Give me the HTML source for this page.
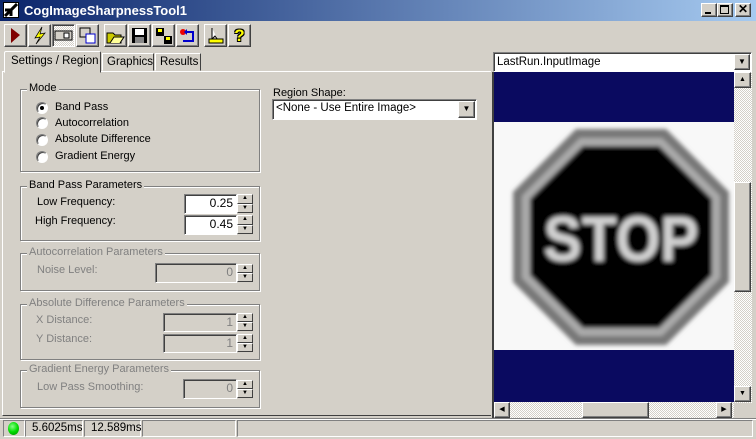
<!DOCTYPE html>
<html><head><style>
*{box-sizing:border-box;margin:0;padding:0}
body{width:756px;height:439px;background:#d4d0c8;font-family:"Liberation Sans",sans-serif;font-size:11px;position:relative;overflow:hidden;color:#000}
.a{position:absolute}
.raised{border:1px solid;border-color:#fff #404040 #404040 #fff;box-shadow:inset -1px -1px 0 #808080}
.sunk{border:1px solid;border-color:#808080 #fff #fff #808080;box-shadow:inset 1px 1px 0 #404040}
.grp{position:absolute;border:1px solid #808080;box-shadow:1px 1px 0 #fff, inset 1px 1px 0 #fff}
.grp span{position:absolute;top:-8px;left:6px;background:#d4d0c8;padding:0 2px;font-size:11px}
.dis{color:#808080}
.fld{position:absolute;background:#fff;text-align:right;padding-right:3px;font-size:12px;line-height:16px}
.fld.d{background:#d4d0c8}
.spin{position:absolute;width:16px}
.spin div{height:50%;background:#d4d0c8;border:1px solid;border-color:#fff #404040 #404040 #fff;font-size:6px;text-align:center;line-height:7px}
.radio{position:absolute;width:12px;height:12px;border-radius:50%;background:#fff;border:1px solid;border-color:#808080 #fff #fff #808080;box-shadow:inset 1px 1px 0 #404040}
.tb{position:absolute;top:24px;width:23px;height:23px}
</style></head><body>
<div class="a" style="left:0;top:0;width:756px;height:21px;background:linear-gradient(90deg,#0a246a,#a6caf0)"></div>
<div class="a" style="left:3px;top:2px;width:16px;height:16px;background:#fff;border:1px solid #000"><svg width="14" height="14"><path d="M1 13L13 1M1 7h6v6" stroke="#000" stroke-width="3" fill="none"/></svg></div>
<div class="a" style="left:24px;top:3px;color:#fff;font-weight:bold;font-size:13px">CogImageSharpnessTool1</div>
<div class="a raised" style="left:701px;top:3px;width:16px;height:14px;background:#d4d0c8"><div class="a" style="left:3px;top:8px;width:6px;height:2px;background:#000"></div></div>
<div class="a raised" style="left:717px;top:3px;width:16px;height:14px;background:#d4d0c8"><div class="a" style="left:2px;top:1px;width:9px;height:9px;border:1px solid #000;border-top-width:2px"></div></div>
<div class="a raised" style="left:735px;top:3px;width:16px;height:14px;background:#d4d0c8;font-size:12px;font-weight:bold;line-height:11px;text-align:center">✕</div>
<div class="tb raised" style="left:4px"><svg width="21" height="21"><path d="M6 3L15 10L6 18Z" fill="#800000"/></svg></div>
<div class="tb raised" style="left:28px"><svg width="21" height="21"><path d="M13 2L6 13L11 12L7 19L16 8L11 9Z" fill="#ff0" stroke="#000" stroke-width=".7"/></svg></div>
<div class="tb sunk" style="left:52px;background:repeating-conic-gradient(#fff 0 25%,#d4d0c8 0 50%) 0 0/2px 2px"><svg width="21" height="21"><rect x="2" y="6" width="17" height="9" fill="#d4d0c8" stroke="#000"/><rect x="11" y="8" width="5" height="5" fill="#fff" stroke="#000"/></svg></div>
<div class="tb raised" style="left:76px"><svg width="21" height="21"><rect x="3" y="3" width="10" height="9" fill="#d4d0c8" stroke="#000"/><rect x="9" y="9" width="9" height="9" fill="#fff" stroke="#00c"/></svg></div>
<div class="tb raised" style="left:104px"><svg width="21" height="21"><path d="M2 8h6l2 2h6v8H2Z" fill="#cc0" stroke="#000"/><path d="M5 18l4-6h10l-4 6" fill="#ff9" stroke="#000"/></svg></div>
<div class="tb raised" style="left:128px"><svg width="21" height="21"><rect x="3" y="3" width="15" height="15" fill="#000"/><rect x="6" y="4" width="9" height="6" fill="#fff"/><rect x="6" y="12" width="9" height="6" fill="#888"/></svg></div>
<div class="tb raised" style="left:152px"><svg width="21" height="21"><rect x="3" y="3" width="8" height="8" fill="#000"/><rect x="11" y="11" width="8" height="8" fill="#000"/><rect x="5" y="4" width="4" height="3" fill="#ff0"/><rect x="13" y="12" width="4" height="3" fill="#ff0"/></svg></div>
<div class="tb raised" style="left:176px"><svg width="21" height="21"><circle cx="6" cy="7" r="3" fill="#e00"/><path d="M10 7h6v9H6" stroke="#00c" stroke-width="2" fill="none"/><path d="M10 4l-3 3 3 3" fill="#00c"/></svg></div>
<div class="tb raised" style="left:204px"><svg width="21" height="21"><path d="M7 3v11l3-3 3 4" stroke="#000" fill="#fff"/><rect x="4" y="14" width="14" height="4" fill="#ff0" stroke="#000"/></svg></div>
<div class="tb raised" style="left:228px;font-weight:bold;font-size:17px;text-align:center;line-height:21px;color:#ff0;text-shadow:1px 1px 0 #000,-1px -1px 0 #000,1px -1px 0 #000,-1px 1px 0 #000">?</div>
<div class="a raised" style="left:2px;top:71px;width:489px;height:345px;border-right:none;border-bottom-color:#404040;box-shadow:none"></div>
<div class="a" style="left:4px;top:51px;width:97px;height:22px;background:#d4d0c8;border:1px solid;border-color:#fff #404040 transparent #fff;border-radius:2px 2px 0 0;padding:3px 0 0 6px;font-size:11.5px">Settings / Region</div>
<div class="a" style="left:102px;top:53px;width:52px;height:18px;border:1px solid;border-color:#fff #404040 transparent #fff;padding:2px 0 0 4px;font-size:11.5px">Graphics</div>
<div class="a" style="left:155px;top:53px;width:46px;height:18px;border:1px solid;border-color:#fff #404040 transparent #fff;padding:2px 0 0 4px;font-size:11.5px">Results</div>
<div class="grp" style="left:20px;top:89px;width:240px;height:83px"><span>Mode</span></div>
<div class="radio" style="left:36px;top:102px"><div class="a" style="left:3px;top:3px;width:4px;height:4px;background:#000;border-radius:50%"></div></div>
<div class="a" style="left:55px;top:101px">Band Pass</div>
<div class="radio" style="left:36px;top:117px"></div><div class="a" style="left:55px;top:117px">Autocorrelation</div>
<div class="radio" style="left:36px;top:134px"></div><div class="a" style="left:55px;top:133px">Absolute Difference</div>
<div class="radio" style="left:36px;top:151px"></div><div class="a" style="left:55px;top:150px">Gradient Energy</div>
<div class="grp" style="left:20px;top:186px;width:240px;height:55px"><span>Band Pass Parameters</span></div>
<div class="a" style="left:37px;top:196px">Low Frequency:</div>
<div class="fld sunk" style="left:184px;top:194px;width:53px;height:20px">0.25</div>
<div class="spin" style="left:237px;top:194px;height:19px"><div>▲</div><div>▼</div></div>
<div class="a" style="left:35px;top:215px">High Frequency:</div>
<div class="fld sunk" style="left:184px;top:215px;width:53px;height:20px">0.45</div>
<div class="spin" style="left:237px;top:215px;height:19px"><div>▲</div><div>▼</div></div>
<div class="grp" style="left:20px;top:253px;width:240px;height:38px"><span class="dis">Autocorrelation Parameters</span></div>
<div class="a dis" style="left:37px;top:264px">Noise Level:</div>
<div class="fld d sunk dis" style="left:155px;top:263px;width:82px;height:20px">0</div>
<div class="spin" style="left:237px;top:264px;height:18px"><div>▲</div><div>▼</div></div>
<div class="grp" style="left:20px;top:304px;width:240px;height:56px"><span class="dis">Absolute Difference Parameters</span></div>
<div class="a dis" style="left:36px;top:314px">X Distance:</div>
<div class="fld d sunk dis" style="left:163px;top:313px;width:74px;height:19px">1</div>
<div class="spin" style="left:237px;top:313px;height:18px"><div>▲</div><div>▼</div></div>
<div class="a dis" style="left:36px;top:333px">Y Distance:</div>
<div class="fld d sunk dis" style="left:163px;top:334px;width:74px;height:19px">1</div>
<div class="spin" style="left:237px;top:334px;height:18px"><div>▲</div><div>▼</div></div>
<div class="grp" style="left:20px;top:370px;width:240px;height:38px"><span class="dis">Gradient Energy Parameters</span></div>
<div class="a dis" style="left:37px;top:381px">Low Pass Smoothing:</div>
<div class="fld d sunk dis" style="left:183px;top:379px;width:54px;height:20px">0</div>
<div class="spin" style="left:237px;top:380px;height:18px"><div>▲</div><div>▼</div></div>
<div class="a" style="left:273px;top:87px">Region Shape:</div>
<div class="a sunk" style="left:272px;top:99px;width:205px;height:21px;background:#fff;padding:2px 0 0 3px;font-size:11.5px">&lt;None - Use Entire Image&gt;</div>
<div class="a raised" style="left:458px;top:101px;width:17px;height:17px;background:#d4d0c8;font-size:8px;text-align:center;line-height:14px">▼</div>
<div class="a sunk" style="left:493px;top:52px;width:259px;height:20px;background:#fff;padding:3px 0 0 3px;font-size:11.5px">LastRun.InputImage</div>
<div class="a raised" style="left:734px;top:54px;width:16px;height:16px;background:#d4d0c8;font-size:8px;text-align:center;line-height:14px">▼</div>
<div class="a" style="left:492px;top:72px;width:2px;height:348px;background:#404040"></div>
<div class="a" style="left:494px;top:72px;width:240px;height:331px;background:#f8f8f8">
<div class="a" style="left:0;top:0;width:240px;height:50px;background:#0a0a60"></div>
<div class="a" style="left:0;top:278px;width:240px;height:53px;background:#0a0a60"></div>
<svg class="a" style="left:0;top:0" width="240" height="331">
<defs><filter id="b"><feGaussianBlur stdDeviation="2.2"/></filter></defs>
<g filter="url(#b)" transform="translate(127,165)">
<polygon points="-45,-108 45,-108 108,-45 108,45 45,108 -45,108 -108,45 -108,-45" fill="#777"/>
<polygon points="-41,-99 41,-99 99,-41 99,41 41,99 -41,99 -99,41 -99,-41" fill="#aaa"/>
<polygon points="-38,-91 38,-91 91,-38 91,38 38,91 -38,91 -91,38 -91,-38" fill="#000"/>
<text x="0" y="24" text-anchor="middle" font-family="Liberation Sans" font-weight="bold" font-size="64" fill="#d0d0d0" textLength="155" lengthAdjust="spacingAndGlyphs">STOP</text>
</g></svg>
</div>
<div class="a" style="left:734px;top:72px;width:18px;height:331px;background:repeating-conic-gradient(#fff 0 25%,#d4d0c8 0 50%) 0 0/2px 2px"></div>
<div class="a raised" style="left:734px;top:72px;width:17px;height:16px;background:#d4d0c8;font-size:7px;text-align:center;line-height:14px">▲</div>
<div class="a raised" style="left:734px;top:182px;width:17px;height:110px;background:#d4d0c8"></div>
<div class="a raised" style="left:734px;top:386px;width:17px;height:16px;background:#d4d0c8;font-size:7px;text-align:center;line-height:14px">▼</div>
<div class="a" style="left:494px;top:402px;width:240px;height:17px;background:repeating-conic-gradient(#fff 0 25%,#d4d0c8 0 50%) 0 0/2px 2px"></div>
<div class="a raised" style="left:494px;top:402px;width:16px;height:16px;background:#d4d0c8;font-size:7px;text-align:center;line-height:14px">◀</div>
<div class="a raised" style="left:582px;top:402px;width:67px;height:16px;background:#d4d0c8"></div>
<div class="a raised" style="left:716px;top:402px;width:16px;height:16px;background:#d4d0c8;font-size:7px;text-align:center;line-height:14px">▶</div>
<div class="a" style="left:0;top:418px;width:756px;height:1px;background:#808080"></div>
<div class="a" style="left:0;top:419px;width:756px;height:1px;background:#fff"></div>
<div class="a sunk" style="left:3px;top:420px;width:22px;height:17px;box-shadow:none"></div>
<div class="a" style="left:8px;top:422px;width:11px;height:13px;border-radius:50%;background:radial-gradient(circle at 40% 35%,#8f8,#0d0 50%,#080)"></div>
<div class="a sunk" style="left:25px;top:420px;width:58px;height:17px;box-shadow:none;padding:1px 0 0 6px;font-size:11.5px">5.6025ms</div>
<div class="a sunk" style="left:84px;top:420px;width:57px;height:17px;box-shadow:none;padding:1px 0 0 6px;font-size:11.5px">12.589ms</div>
<div class="a sunk" style="left:142px;top:420px;width:94px;height:17px;box-shadow:none"></div>
<div class="a sunk" style="left:237px;top:420px;width:516px;height:17px;box-shadow:none"></div>
</body></html>
